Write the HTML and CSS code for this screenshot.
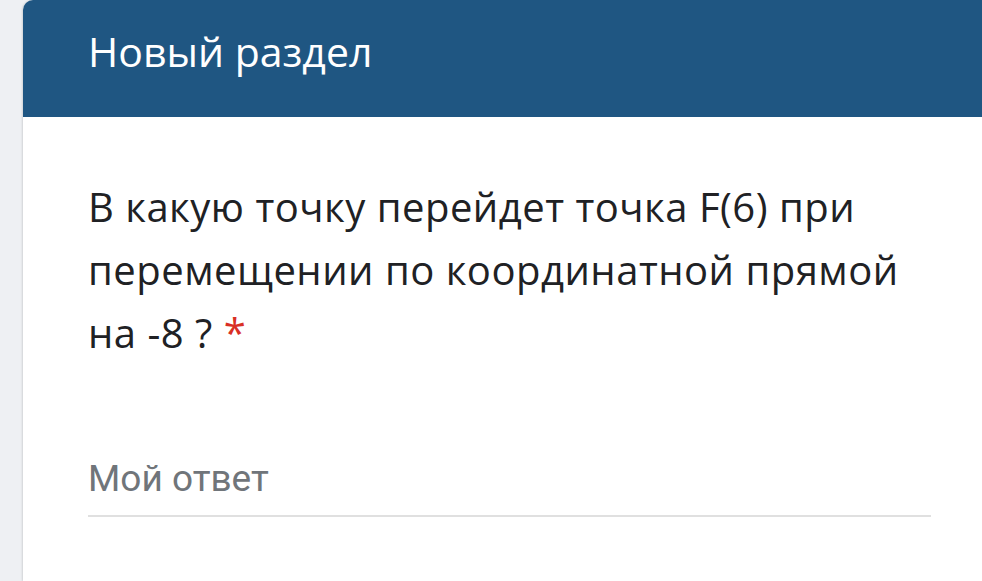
FILE: index.html
```html
<!DOCTYPE html>
<html>
<head>
    <title>Новый раздел</title>
    <link rel="stylesheet" href="styles.css">
</head>
<body>

<div class="card">
    <div class="cardHeader">Новый раздел</div>
    <div class="cardBody">
        <div class="question">В какую точку перейдет точка F(6) при перемещении по координатной прямой на -8 ? <span class="required">*</span></div>
        <div class="answer">Мой ответ</div>
    </div>
</div>

</body>
</html>
```

FILE: styles.css
```css
body{
    margin: 0;
    background: #eef0f3;
    font-family: Roboto, "Noto Sans", sans-serif;
    overflow: hidden;
}

.card{
    margin-left: 23px;
    width: 1000px;
    height: 581px;
    background: #fff;
    border-top-left-radius: 10px;
    box-shadow: -1px 0 2px rgba(0, 0, 0, 0.12);
}

.cardHeader{
    height: 117px;
    box-sizing: border-box;
    padding: 23px 0 0 65px;
    background: #1f5682;
    color: #fff;
    font-family: "Open Sans", sans-serif;
    font-size: 41px;
    border-top-left-radius: 10px;
}

.cardBody{
    padding: 58px 0 0 65px;
    width: 843px;
}

.question{
    font-family: "Open Sans", sans-serif;
    font-size: 40px;
    letter-spacing: 0.5px;
    line-height: 63px;
    color: #202124;
}

.required{
    color: #d93025;
}

.answer{
    margin-top: 93px;
    padding-bottom: 15px;
    border-bottom: 2px solid #e0e0e0;
    font-size: 37px;
    color: #70757a;
}
```
